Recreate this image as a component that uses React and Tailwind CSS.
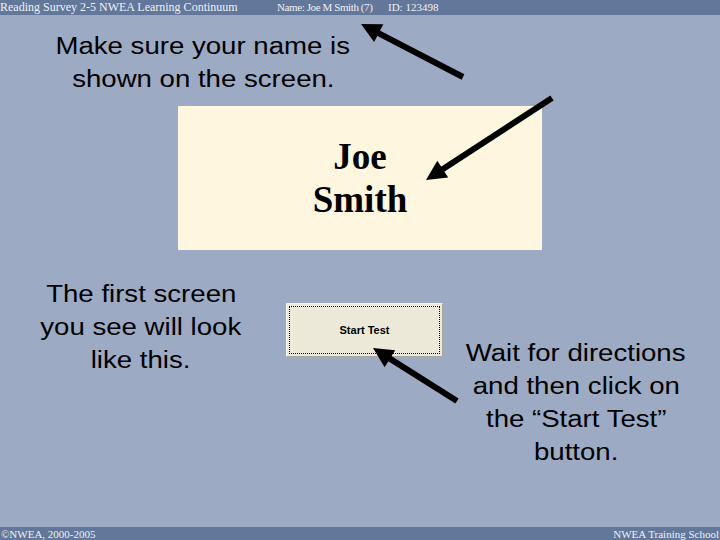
const arrows = [
  { from: [463, 77], to: [361, 24] },
  { from: [552, 98], to: [426, 180] },
  { from: [457, 401], to: [373, 348] },
];

function Arrow({ from, to }) {
  const dx = to[0] - from[0];
  const dy = to[1] - from[1];
  const len = Math.hypot(dx, dy);
  const ux = dx / len;
  const uy = dy / len;
  const head = 20;
  const half = 10;
  const bx = to[0] - ux * head;
  const by = to[1] - uy * head;
  const pts = [
    [to[0], to[1]],
    [bx - uy * half, by + ux * half],
    [bx + uy * half, by - ux * half],
  ]
    .map((p) => p.join(','))
    .join(' ');
  return (
    <g>
      <line x1={from[0]} y1={from[1]} x2={bx + ux * 2} y2={by + uy * 2} stroke="black" strokeWidth="6" />
      <polygon points={pts} fill="black" />
    </g>
  );
}

function Caption({ lines }) {
  return (
    <div className="text-center text-[23px] leading-[33px] text-black font-['Liberation_Sans',Arial,sans-serif]">
      {lines.map((l) => (
        <div key={l} className="whitespace-nowrap">
          <span className="inline-block scale-x-[1.2]">{l}</span>
        </div>
      ))}
    </div>
  );
}

export default function App() {
  return (
    <div className="relative w-[720px] h-[540px] overflow-hidden flex flex-col bg-[#9daac4]">
      <div className="h-[15px] bg-[#627799] flex text-[12px] leading-[14px] text-[#eef1f6] font-['Liberation_Serif','Times_New_Roman',serif] whitespace-nowrap">
        <span className="w-[277px]">Reading Survey 2-5 NWEA Learning Continuum</span>
        <span className="w-[111px] text-[11px] tracking-[-0.4px]">Name: Joe M Smith (7)</span>
        <span className="text-[11px]">ID: 123498</span>
      </div>

      <div className="flex-1 flex flex-col">
        <div className="w-[406px] mt-[15px]">
          <Caption lines={['Make sure your name is', 'shown on the screen.']} />
        </div>

        <div className="mt-[10px] ml-[178px] w-[364px] h-[144px] bg-[#fff6df] flex items-center justify-center">
          <div className="text-center text-[37px] leading-[43px] font-bold text-black font-['Liberation_Serif','Times_New_Roman',serif]">
            Joe
            <br />
            Smith
          </div>
        </div>

        <div className="flex items-start">
          <div className="w-[282px] mt-[28px]">
            <Caption lines={['The first screen', 'you see will look', 'like this.']} />
          </div>
          <div className="ml-[4px] mt-[53px] w-[157px] h-[54px] bg-[#ece9d8] border border-t-[#f4f3ee] border-l-[#f4f3ee] border-r-[#a9a79c] border-b-[#a9a79c] p-[2px]">
            <div className="w-full h-full border border-dotted border-black flex items-center justify-center text-[11px] font-bold text-black font-['Liberation_Sans',Arial,sans-serif]">
              Start Test
            </div>
          </div>
          <div className="ml-[3px] w-[260px] mt-[87px]">
            <Caption lines={['Wait for directions', 'and then click on', 'the \u201cStart Test\u201d', 'button.']} />
          </div>
        </div>
      </div>

      <div className="h-[13px] bg-[#627799] flex justify-between items-start px-[1px] text-[11px] leading-[14px] text-[#eef1f6] font-['Liberation_Serif','Times_New_Roman',serif] whitespace-nowrap">
        <span>©NWEA, 2000-2005</span>
        <span>NWEA Training School</span>
      </div>

      <svg className="absolute inset-0 pointer-events-none" width="720" height="540" viewBox="0 0 720 540">
        {arrows.map((a, i) => (
          <Arrow key={i} {...a} />
        ))}
      </svg>
    </div>
  );
}
